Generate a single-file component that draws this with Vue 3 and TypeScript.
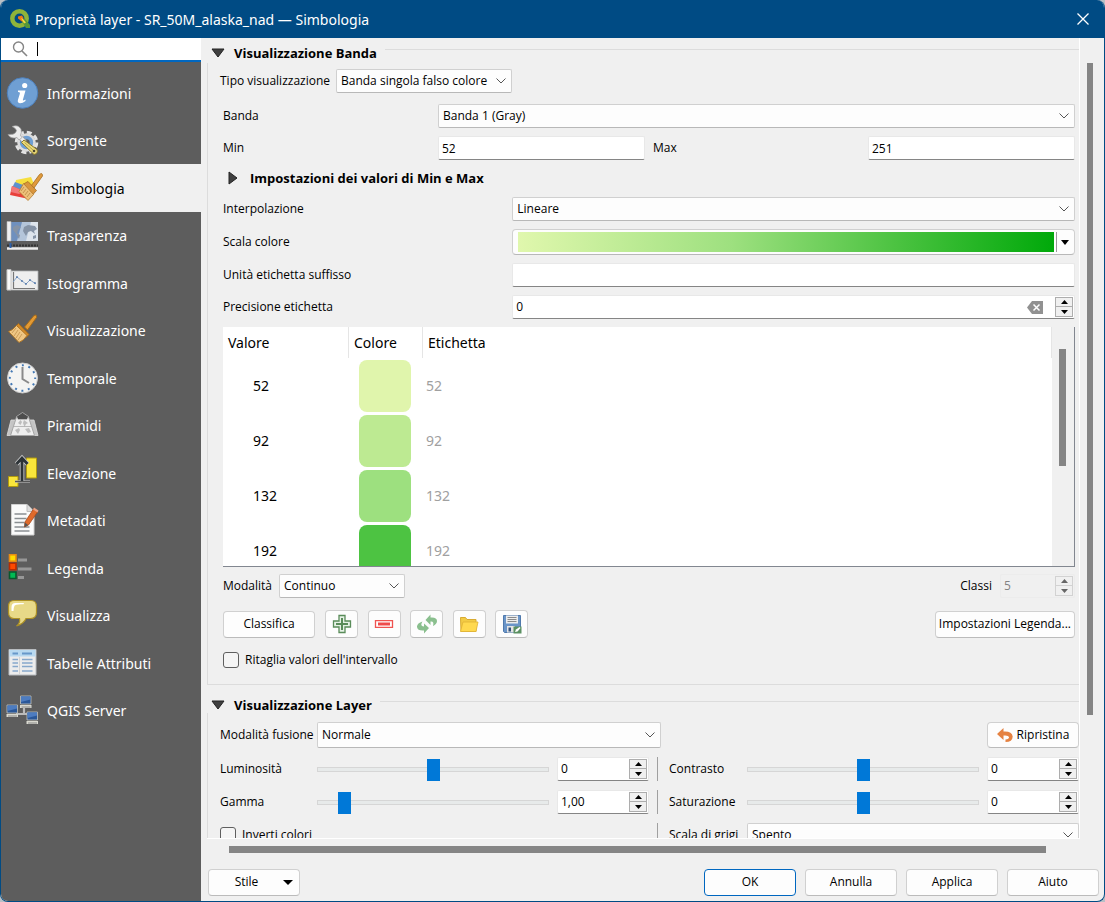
<script setup lang="ts">
import { reactive, ref } from 'vue'

interface NavItem {
  id: string
  label: string
}

const navItems: NavItem[] = [
  { id: 'info', label: 'Informazioni' },
  { id: 'source', label: 'Sorgente' },
  { id: 'symbology', label: 'Simbologia' },
  { id: 'transparency', label: 'Trasparenza' },
  { id: 'histogram', label: 'Istogramma' },
  { id: 'rendering', label: 'Visualizzazione' },
  { id: 'temporal', label: 'Temporale' },
  { id: 'pyramids', label: 'Piramidi' },
  { id: 'elevation', label: 'Elevazione' },
  { id: 'metadata', label: 'Metadati' },
  { id: 'legend', label: 'Legenda' },
  { id: 'display', label: 'Visualizza' },
  { id: 'tables', label: 'Tabelle Attributi' },
  { id: 'server', label: 'QGIS Server' },
]

const active = ref('symbology')

const classes = [
  { value: '52', color: '#e0f5ac' },
  { value: '92', color: '#bdea92' },
  { value: '132', color: '#9de07f' },
  { value: '192', color: '#4dc342' },
  { value: '251', color: '#05ab0c' },
]

const form = reactive({
  min: '52',
  max: '251',
  suffix: '',
  precision: '0',
  count: '5',
  brightness: 0,
  contrast: 0,
  gamma: 9,
  saturation: 0,
})
</script>

<template>
  <div class="window">
    <header class="titlebar">
      <svg class="logo" viewBox="0 0 20 20" aria-hidden="true">
        <circle cx="9.5" cy="9.500" r="7.200" fill="none" stroke="#8fb43a" stroke-width="4.500" />
        <path d="M11 11l4-1 5 6v3h-4z" fill="#56973a" />
        <path d="M8 7.500l4-1 1.500 2.500-1 4L8 9.500z" fill="#ee7913" />
        <path d="M11 9l2 1 3 3.500-2 1z" fill="#f5dc40" />
      </svg>
      <h1>Proprietà layer - SR_50M_alaska_nad — Simbologia</h1>
      <button class="close" type="button" aria-label="Chiudi">
        <svg viewBox="0 0 12 12"><path d="M.5.5l11 11M11.500.5l-11 11" stroke="#fff" stroke-width="1.300" fill="none" /></svg>
      </button>
    </header>

    <div class="body">
      <aside class="sidebar">
        <label class="search">
          <svg viewBox="0 0 16 16" aria-hidden="true">
            <circle cx="6.500" cy="6" r="5" fill="none" stroke="#858585" stroke-width="1.400" />
            <path d="M10 10l5 5" stroke="#858585" stroke-width="1.600" />
          </svg>
          <span class="caret"></span>
          <input type="text" aria-label="Cerca" />
        </label>
        <nav class="nav">
          <button
            v-for="item in navItems"
            :key="item.id"
            type="button"
            class="nav-item"
            :class="{ selected: item.id === active }"
            @click="active = item.id"
          >
            <svg class="nav-icon" viewBox="0 0 32 32" aria-hidden="true">
              <g v-if="item.id === 'info'">
                <circle cx="16.500" cy="16" r="15.300" fill="#6f9fd3" stroke="#4d7fba" />
                <circle cx="18.700" cy="8.500" r="2.600" fill="#fff" />
                <path d="M12 13.500h7.500l-2.600 9.300q-.5 1.700 2.600-.3v1.500q-3 2.500-5.700 2.300-2.600-.4-1.900-3.200l2-6.700q.3-1.300-1.900-1.300z" fill="#fff" />
              </g>
              <g v-else-if="item.id === 'source'">
                <circle cx="20.500" cy="18.500" r="10.300" fill="none" stroke="#e4e4e4" stroke-width="3" stroke-dasharray="5 3.090" />
                <circle cx="20.500" cy="18.500" r="8" fill="#6f9fd3" stroke="#dcdcdc" stroke-width="2.600" />
                <circle cx="20.500" cy="18.500" r="3.200" fill="#5d5d5d" />
                <path d="M15 14l4 4" stroke="#9a9a9a" stroke-width="5" />
                <path d="M14 13l4.500 4.500" stroke="#ececec" stroke-width="3.500" />
                <path d="M6 2.500q6-2.500 9 2.500 1 3-.5 6.500l1.500 2-3 2.500-2-2.500q-6 2-9-3l5-.3q3-1 3.500-3.500-.5-2.500-4.500-4.200z" fill="#ececec" stroke="#9a9a9a" stroke-width=".7" />
                <path d="M18 16l13 9.500q1.500 4-3 5L15.500 18.500z" fill="#eddc7a" stroke="#8b7a2c" />
                <path d="M18.500 18.500l8.500 7.500" stroke="#b8a54a" />
                <circle cx="28" cy="27" r="1.300" fill="#4a4530" />
              </g>
              <g v-else-if="item.id === 'symbology'">
                <path d="M6 8l15-3 3 7-8 8-12-4z" fill="#f6df3f" />
                <path d="M5 10l8 3 7 6-6 4-12-7z" fill="#5d91cf" />
                <path d="M2 14l12 5 5 8-19-4z" fill="#e8403b" />
                <path d="M2 14l12 5-5 3-8-2z" fill="#f2787a" />
                <path d="M21 14L29.500 2.500q3-2.500 3 1.500L24 16z" fill="#e09a3c" stroke="#a66d20" stroke-width=".8" />
                <path d="M18 9.500l8.500 9-4 4.500-9-11z" fill="#d9953d" stroke="#a66d20" stroke-width=".8" />
                <path d="M13.500 11.500l10 11-5.500 6-9-9z" fill="#edc07a" stroke="#b47a2c" stroke-width=".8" />
                <path d="M14 15l-3 4m5-2l-3 4m5-2l-3 4m5-2l-3 4" stroke="#b98943" stroke-width=".8" />
              </g>
              <g v-else-if="item.id === 'transparency'">
                <path d="M5 3h27v19H5z" fill="#6f90be" />
                <path d="M16 3h16v19H11z" fill="#b4c5da" />
                <path d="M25 3h7v19H20z" fill="#dde4ec" />
                <path d="M7 8l4-2 4 2-3 3-1 3 3 2-1 4-3-5-3-4zM18 8l4-2 7 1 2 3-3 2 1 3-4-3-3 1-2 4-3-5zM27 17l3-1v3l-3 1z" fill="#8593a6" />
                <path d="M1 2.500h4V22H1z" fill="#f1f1f1" stroke="#b5b5b5" stroke-width=".6" />
                <path d="M1 26.500h31" stroke="#333" stroke-width="2" stroke-dasharray="2 1" />
                <path d="M1 29.500h31" stroke="#ededed" stroke-width="2.500" />
                <path d="M3.500 24v5h2v-5z" fill="#2e62ad" />
              </g>
              <g v-else-if="item.id === 'histogram'">
                <path d="M4 4h28v19H1V3h3z" fill="#eee" stroke="#aeb1b3" stroke-width=".8" />
                <path d="M1 2.500h4V23H1z" fill="#fafafa" stroke="#bbb" stroke-width=".8" />
                <path d="M7.500 5v16.500H29" fill="none" stroke="#777" stroke-width="1.200" />
                <path d="M7 15l4-5 5 4 4 3 4-4 6 4" fill="none" stroke="#7d9cc4" stroke-width=".9" />
                <path d="M10.200 9.200h1.500v1.500h-1.500zM15.200 13.200h1.500v1.500h-1.500zM19.200 16.200h1.500v1.500h-1.500zM23.200 12.200h1.500v1.500h-1.500zM28.200 15.200h1.500v1.500h-1.500z" fill="#3c669e" />
              </g>
              <g v-else-if="item.id === 'rendering'">
                <path d="M18.500 13L28 1.500q3-1.500 2.500 2L21.500 16z" fill="#e39a34" stroke="#a56a18" />
                <path d="M12.500 9.500l10.500 11-3 3L9.500 12.500z" fill="#d58b28" stroke="#a56a18" />
                <path d="M10.500 11.500q-4 5-8 6l10.500 11q5-2 8-7z" fill="#efc683" stroke="#ad7426" />
                <path d="M10 14l-4 5m6-3l-4 6m6-4l-4 6m6-4l-4 6" stroke="#c2924e" stroke-width=".8" />
              </g>
              <g v-else-if="item.id === 'temporal'">
                <circle cx="16.500" cy="16" r="15" fill="#f4f4f2" stroke="#cfcfcf" />
                <circle cx="16.500" cy="16" r="12.700" fill="none" stroke="#4378b4" stroke-width="2" stroke-dasharray="2 4.650" stroke-dashoffset="1" />
                <path d="M16.500 5v12l6.500 4" fill="none" stroke="#8a8a8a" stroke-width="2" />
              </g>
              <g v-else-if="item.id === 'pyramids'">
                <path d="M5 11h23l4 15.500H1z" fill="#c4c4c4" stroke="#dcdcdc" stroke-width=".8" />
                <path d="M10.500 8h12l6 18.500H4.500z" fill="#eee" stroke="#a5a5a5" />
                <path d="M10.500 7.500l6-4 6 4-1.500 3h-9z" fill="#4d4d4d" stroke="#ccc" stroke-width=".6" />
                <path d="M12 14l2.500-3 1.500 2-1.500 3zM18 11l4 3-2 1-1.500 3-1.500-4zM9 21l4-2 1 2-2 4zM19 20l4-1 2 4-3 1z" fill="#bdbdbd" />
                <path d="M7.500 17.500h18" stroke="#aaa" stroke-width=".8" />
              </g>
              <g v-else-if="item.id === 'elevation'">
                <path d="M20.500 1h10v20h-10z" fill="#f9e53b" stroke="#b19a0e" />
                <path d="M2.500 19.500h9.500v10H2.500z" fill="#f9e53b" stroke="#b19a0e" />
                <path d="M9 24.500h15" stroke="#a8a8a8" stroke-width="2.400" />
                <path d="M9 24.500h15" stroke="#555" />
                <path d="M16 24V2M10.500 7L16 1l5.500 6" fill="none" stroke="#c9c9c9" stroke-width="4.500" />
                <path d="M16 24V2M10.500 7L16 1l5.500 6" fill="none" stroke="#2d3337" stroke-width="2.800" />
              </g>
              <g v-else-if="item.id === 'metadata'">
                <path d="M5.500.5H21l7 7v23.500H5.500z" fill="#fafafa" stroke="#d0d0d0" />
                <path d="M21 .5v7h7" fill="#ddd" stroke="#bbb" />
                <path d="M8.500 10h12m-12 4.500h12m-12 4h10m-10 4.500h15m-15 4h15" stroke="#8a8f92" stroke-width="1.300" />
                <path d="M27.500 5l4 3-9 13-4 2 .5-5z" fill="#df6a2b" stroke="#a8481a" stroke-width=".8" />
                <path d="M18.700 18.500l3.500 2.500-3.500 2z" fill="#555" />
                <path d="M28 3.500l4.500 3-1 2-4.500-3z" fill="#e9a184" />
              </g>
              <g v-else-if="item.id === 'legend'">
                <path d="M3.500 2.800h6.500v6.500H3.500z" fill="#ffdb00" stroke="#e78c13" stroke-width="1.600" />
                <path d="M3.500 11.300h6.500v6.500H3.500z" fill="#ff4a00" stroke="#b92b00" stroke-width="1.600" />
                <path d="M3.500 20h6.500v6.500H3.500z" fill="#00ba53" stroke="#09572d" stroke-width="1.600" />
                <path d="M12 8h9m-9 9h13.500M12 25.500h6" stroke="#979797" stroke-width="3" />
              </g>
              <g v-else-if="item.id === 'display'">
                <path d="M8 1.500h17q5.500 0 5.500 6v6q0 6-6 6h-4.500q-2 5-9.500 7.500 4-3 3-7.500H8q-5.500 0-5.500-6v-6q0-6 5.500-6z" fill="#e8d988" stroke="#ad9125" stroke-width="1.200" />
                <path d="M5.500 12V8q0-4 4-4H18l-.5 1.300q-8-.5-9 1.500T7.500 12z" fill="#fff" />
              </g>
              <g v-else-if="item.id === 'tables'">
                <path d="M3 2.500h27V28H3z" fill="#ececec" stroke="#b8bcc0" />
                <path d="M3.500 3h26v6.500h-26z" fill="#b8d9f0" />
                <path d="M6.500 6.500h5.500m4 0h10" stroke="#6798c9" stroke-width="2" />
                <path d="M6.500 12.500h5.500m4 0h10.500M6.500 16h5.500m4 0h10.500m-20 3.500h5.500m4 0h10.500M6.500 24h5.500m4 0h10.500" stroke="#86a8cb" stroke-width="1.400" />
                <path d="M13.500 10v18" stroke="#d4d4d4" />
              </g>
              <g v-else>
                <path d="M18 12v8m-8 0h12" stroke="#bbb" stroke-width="2.200" fill="none" />
                <g v-for="p in [[14, 1.5], [0.5, 10.5], [20.5, 17.5]]" :key="p[0]" :transform="`translate(${p[0]} ${p[1]})`">
                  <path d="M.5.5h10.500v8H.5z" fill="#2a5798" stroke="#c4c4bc" stroke-width=".8" />
                  <path d="M1 1h9.500v3l-9.500 2.500z" fill="#4d7cc0" />
                  <path d="M0 9.500h11.500v3H0z" fill="#d9d9d0" />
                  <path d="M1.500 11.500h9" stroke="#888" />
                </g>
              </g>
            </svg>
            <span>{{ item.label }}</span>
          </button>
        </nav>
      </aside>

      <main class="main">
        <div class="scroll-frame">
          <div class="viewport">
            <section class="group">
              <h2 class="group-title">
                <svg class="tri" viewBox="0 0 14 10"><path d="M1 1h12L7 9z" fill="#404040" stroke="#222" /></svg>
                <span>Visualizzazione Banda</span>
              </h2>
              <div class="group-body band">
                <div class="row type-row">
                  <label for="type">Tipo visualizzazione</label>
                  <span class="combo">
                    <select id="type"><option>Banda singola falso colore</option></select>
                    <svg viewBox="0 0 10 6"><path d="M.5.5L5 5 9.500.5" /></svg>
                  </span>
                </div>

                <div class="inset">
                  <div class="quad">
                    <label for="band">Banda</label>
                    <span class="combo wide">
                      <select id="band"><option>Banda 1 (Gray)</option></select>
                      <svg viewBox="0 0 10 6"><path d="M.5.5L5 5 9.500.5" /></svg>
                    </span>
                    <label for="min">Min</label>
                    <input id="min" v-model="form.min" class="field" type="text" />
                    <label for="max">Max</label>
                    <input id="max" v-model="form.max" class="field" type="text" />
                  </div>

                  <h3 class="sub-title">
                    <svg viewBox="0 0 10 14"><path d="M1 1v12l8-6z" fill="#404040" stroke="#222" /></svg>
                    <span>Impostazioni dei valori di Min e Max</span>
                  </h3>

                  <div class="pairs">
                    <label for="interp">Interpolazione</label>
                    <span class="combo">
                      <select id="interp"><option>Lineare</option></select>
                      <svg viewBox="0 0 10 6"><path d="M.5.5L5 5 9.500.5" /></svg>
                    </span>
                    <span id="ramp-label">Scala colore</span>
                    <div class="ramp">
                      <button class="ramp-bar" type="button" aria-labelledby="ramp-label"></button>
                      <button class="ramp-menu" type="button" aria-label="Altre scale">
                        <svg viewBox="0 0 8 5"><path d="M0 0h8L4 5z" /></svg>
                      </button>
                    </div>
                    <label for="suffix">Unità etichetta suffisso</label>
                    <input id="suffix" v-model="form.suffix" class="field" type="text" />
                    <label for="precision">Precisione etichetta</label>
                    <div class="spin">
                      <input id="precision" v-model="form.precision" type="text" />
                      <button class="clear" type="button" aria-label="Cancella">
                        <svg viewBox="0 0 16 13">
                          <path d="M5 0h11v13H5L0 6.500z" fill="#919191" />
                          <path d="M6.500 3.500l6 6m0-6l-6 6" stroke="#fff" stroke-width="1.500" />
                        </svg>
                      </button>
                      <span class="steps">
                        <button type="button" aria-label="Su"><svg viewBox="0 0 7 4"><path d="M0 4h7L3.500 0z" /></svg></button>
                        <button type="button" aria-label="Giù"><svg viewBox="0 0 7 4"><path d="M0 0h7L3.500 4z" /></svg></button>
                      </span>
                    </div>
                  </div>

                  <div class="table-box">
                    <div class="table-view">
                      <table>
                        <thead>
                          <tr>
                            <th class="c-value"><span>Valore</span></th>
                            <th class="c-color"><span>Colore</span></th>
                            <th><span>Etichetta</span></th>
                          </tr>
                        </thead>
                        <tbody>
                          <tr v-for="c in classes" :key="c.value">
                            <td class="value">{{ c.value }}</td>
                            <td><span class="swatch" :style="{ background: c.color }"></span></td>
                            <td class="tag">{{ c.value }}</td>
                          </tr>
                        </tbody>
                      </table>
                    </div>
                    <div class="table-scroll"><span></span></div>
                  </div>

                  <div class="row mode-row">
                    <label for="mode">Modalità</label>
                    <span class="combo mode">
                      <select id="mode"><option>Continuo</option></select>
                      <svg viewBox="0 0 10 6"><path d="M.5.5L5 5 9.500.5" /></svg>
                    </span>
                    <label class="push" for="count">Classi</label>
                    <div class="spin disabled">
                      <input id="count" v-model="form.count" type="text" disabled />
                      <span class="steps">
                        <button type="button" aria-label="Su" disabled><svg viewBox="0 0 7 4"><path d="M0 4h7L3.500 0z" /></svg></button>
                        <button type="button" aria-label="Giù" disabled><svg viewBox="0 0 7 4"><path d="M0 0h7L3.500 4z" /></svg></button>
                      </span>
                    </div>
                  </div>

                  <div class="row tools">
                    <button class="btn" type="button">Classifica</button>
                    <div class="toolset">
                      <button class="btn tool" type="button" aria-label="Aggiungi">
                        <svg viewBox="0 0 20 20">
                          <path d="M7 1.500h6V7h5.500v6H13v5.500H7V13H1.500V7H7z" fill="#e6f2e6" stroke="#5a8c5a" stroke-width="1.300" />
                          <path d="M10 4v12M4 10h12" stroke="#5a8c5a" stroke-width="2" />
                        </svg>
                      </button>
                      <button class="btn tool" type="button" aria-label="Rimuovi">
                        <svg viewBox="0 0 20 20">
                          <path d="M1.500 6.700h17v6.600h-17z" fill="#fff" stroke="#ef5350" stroke-width="1.300" />
                          <path d="M4 10h12" stroke="#ef4b4b" stroke-width="3" />
                        </svg>
                      </button>
                      <button class="btn tool" type="button" aria-label="Inverti">
                        <svg viewBox="0 0 20 20">
                          <path d="M8.500 6l5-5.500v3q6.500-.5 6.500 3.500 0 3-4 5 1.500-5-2.500-4.500v3.500z" fill="#8abf8e" />
                          <path d="M12 14l-5 5.500v-3q-6.500.5-7-3.500-.3-3.500 5.500-5.500-3 5 1.500 5V9.500z" fill="#8abf8e" />
                        </svg>
                      </button>
                      <button class="btn tool" type="button" aria-label="Apri">
                        <svg viewBox="0 0 20 20">
                          <path d="M1.500 3.500h5l1.500 2h9v12h-15z" fill="#f2cb45" stroke="#d8ab32" />
                          <path d="M4 8h15l-2 9.500H1.500z" fill="#ffd94f" stroke="#e0b236" stroke-width=".8" />
                        </svg>
                      </button>
                      <button class="btn tool" type="button" aria-label="Salva">
                        <svg viewBox="0 0 20 20">
                          <path d="M1.500 1.500h17v17h-16l-1-1z" fill="#6b95c8" stroke="#4f79ac" />
                          <path d="M4 1.500h12v8H4z" fill="#ececec" />
                          <path d="M5.500 3.500h9m-9 2h9m-9 2h9" stroke="#8a8a8a" />
                          <path d="M5 12h8v6.500H5z" fill="#e4e4e4" />
                          <path d="M6.500 13.500h2.500v4H6.500z" fill="#31517c" />
                          <path d="M11.500 12.500h8v7h-8z" fill="#5b9062" />
                          <path d="M13 18l1-2.500 3.500-2.500 1 1-3 3.500z" fill="#fff" />
                        </svg>
                      </button>
                    </div>
                    <button class="btn push snug" type="button">Impostazioni Legenda...</button>
                  </div>

                  <label class="check"><input type="checkbox" /><span>Ritaglia valori dell'intervallo</span></label>
                </div>
              </div>
            </section>

            <section class="group">
              <h2 class="group-title second">
                <svg class="tri" viewBox="0 0 14 10"><path d="M1 1h12L7 9z" fill="#404040" stroke="#222" /></svg>
                <span>Visualizzazione Layer</span>
              </h2>
              <div class="group-body layer">
                <div class="row blend-row">
                  <label for="blend">Modalità fusione</label>
                  <span class="combo">
                    <select id="blend"><option>Normale</option></select>
                    <svg viewBox="0 0 10 6"><path d="M.5.5L5 5 9.500.5" /></svg>
                  </span>
                  <button class="btn push reset" type="button">
                    <svg viewBox="0 0 16 16">
                      <path d="M0 7l6.500-6v3.500q8.500-.5 9.200 5-.2 5.500-7.200 5.500v-2.500q3.700-.5 3.500-2.500-.5-2-5.500-1.500V13z" fill="#e58242" />
                    </svg>
                    <span>Ripristina</span>
                  </button>
                </div>
                <div class="adjust">
                  <label for="brightness">Luminosità</label>
                  <input v-model="form.brightness" class="slider" type="range" min="-255" max="255" aria-label="Luminosità" />
                  <div class="spin">
                    <input id="brightness" type="text" value="0" />
                    <span class="steps">
                      <button type="button" aria-label="Su"><svg viewBox="0 0 7 4"><path d="M0 4h7L3.500 0z" /></svg></button>
                      <button type="button" aria-label="Giù"><svg viewBox="0 0 7 4"><path d="M0 0h7L3.500 4z" /></svg></button>
                    </span>
                  </div>
                  <i class="sep"></i>
                  <label for="contrast">Contrasto</label>
                  <input v-model="form.contrast" class="slider" type="range" min="-100" max="100" aria-label="Contrasto" />
                  <div class="spin">
                    <input id="contrast" type="text" value="0" />
                    <span class="steps">
                      <button type="button" aria-label="Su"><svg viewBox="0 0 7 4"><path d="M0 4h7L3.500 0z" /></svg></button>
                      <button type="button" aria-label="Giù"><svg viewBox="0 0 7 4"><path d="M0 0h7L3.500 4z" /></svg></button>
                    </span>
                  </div>

                  <label for="gamma">Gamma</label>
                  <input v-model="form.gamma" class="slider" type="range" min="0" max="100" aria-label="Gamma" />
                  <div class="spin">
                    <input id="gamma" type="text" value="1,00" />
                    <span class="steps">
                      <button type="button" aria-label="Su"><svg viewBox="0 0 7 4"><path d="M0 4h7L3.500 0z" /></svg></button>
                      <button type="button" aria-label="Giù"><svg viewBox="0 0 7 4"><path d="M0 0h7L3.500 4z" /></svg></button>
                    </span>
                  </div>
                  <i class="sep"></i>
                  <label for="saturation">Saturazione</label>
                  <input v-model="form.saturation" class="slider" type="range" min="-100" max="100" aria-label="Saturazione" />
                  <div class="spin">
                    <input id="saturation" type="text" value="0" />
                    <span class="steps">
                      <button type="button" aria-label="Su"><svg viewBox="0 0 7 4"><path d="M0 4h7L3.500 0z" /></svg></button>
                      <button type="button" aria-label="Giù"><svg viewBox="0 0 7 4"><path d="M0 0h7L3.500 4z" /></svg></button>
                    </span>
                  </div>

                  <label class="check span3"><input type="checkbox" /><span>Inverti colori</span></label>
                  <i class="sep"></i>
                  <label for="gray">Scala di grigi</label>
                  <span class="combo span2">
                    <select id="gray"><option>Spento</option></select>
                    <svg viewBox="0 0 10 6"><path d="M.5.5L5 5 9.500.5" /></svg>
                  </span>
                </div>
              </div>
            </section>
          </div>
          <div class="vbar"><span></span></div>
          <div class="hbar"><span></span></div>
        </div>

        <footer class="footer">
          <button class="btn style" type="button">
            <span>Stile</span>
            <svg viewBox="0 0 10 5"><path d="M0 0h10L5 5z" /></svg>
          </button>
          <button class="btn push primary" type="button">OK</button>
          <button class="btn" type="button">Annulla</button>
          <button class="btn" type="button">Applica</button>
          <button class="btn" type="button">Aiuto</button>
        </footer>
      </main>
    </div>
  </div>
</template>

<style>
body {
  margin: 0;
  background: #b9c0c6;
}
</style>

<style scoped>
.window,
.window * {
  box-sizing: border-box;
}
.window {
  display: flex;
  flex-direction: column;
  height: 100vh;
  border: solid #004b84;
  border-width: 0 1px 1px;
  border-radius: 8px;
  overflow: hidden;
  background: #f0f0f0;
  color: #000;
  font: 12px/16px "Open Sans", "Noto Sans", sans-serif;
}
button,
input,
select {
  font: inherit;
  color: inherit;
  margin: 0;
  padding: 0;
}
button {
  border: 0;
  background: none;
}
svg {
  display: block;
  flex: none;
}
h1,
h2,
h3 {
  margin: 0;
}

.titlebar {
  flex: none;
  display: flex;
  align-items: center;
  height: 38px;
  padding: 0 15px 0 9px;
  background: #004b84;
  color: #fff;
}
.logo {
  width: 20px;
  height: 20px;
}
.titlebar h1 {
  margin-left: 5px;
  padding-top: 2px;
  font: 400 14px/16px "Noto Sans", "Open Sans", sans-serif;
}
.close {
  margin-left: auto;
}
.close svg {
  width: 12px;
  height: 12px;
}

.body {
  flex: 1;
  display: flex;
  min-height: 0;
}
.sidebar {
  flex: none;
  width: 200px;
  background: #5d5d5d;
}
.search {
  display: flex;
  align-items: center;
  height: 24px;
  padding-left: 11px;
  background: #fff;
  border-bottom: 2px solid #0067c0;
}
.search svg {
  width: 16px;
  height: 16px;
}
.caret {
  width: 1px;
  height: 14px;
  margin-left: 9px;
  background: #000;
}
.search input {
  flex: 1;
  min-width: 0;
  border: 0;
  outline: 0;
  background: none;
}
.nav {
  display: grid;
  grid-auto-rows: 1fr;
  height: 665px;
  margin-top: 7px;
}
.nav-item {
  display: flex;
  align-items: center;
  gap: 9px;
  padding-left: 5px;
  color: #fff;
  font: 14px/16px "Noto Sans", "Open Sans", sans-serif;
  text-align: left;
}
.nav-item span {
  padding-top: 2px;
}
.nav-item.selected {
  padding-left: 9px;
  background: #f0f0f0;
  color: #000;
}
.nav-icon {
  width: 32px;
  height: 32px;
  overflow: visible;
}

.main {
  flex: 1;
  display: flex;
  flex-direction: column;
  min-width: 0;
  min-height: 0;
}
.scroll-frame {
  flex: 1;
  min-height: 0;
  display: grid;
  grid-template-columns: minmax(0, 1fr) 24px;
  grid-template-rows: minmax(0, 1fr) 22px;
  padding-left: 6px;
}
.viewport {
  overflow: hidden;
  padding-top: 5px;
  border: solid #fff;
  border-width: 0 1px 1px 0;
}
.vbar {
  padding: 25px 0 0 7px;
}
.vbar span {
  display: block;
  width: 6px;
  height: 84%;
  background: #858585;
}
.hbar {
  padding: 7px 34px 0 22px;
}
.hbar span {
  display: block;
  height: 7px;
  background: #858585;
}

.group-title {
  display: flex;
  align-items: center;
  height: 20px;
  padding-left: 4px;
  font-size: 13px;
}
.group-title.second {
  height: 28px;
  padding-top: 12px;
}
.tri {
  width: 14px;
  height: 10px;
}
.group-title span {
  margin-left: 9px;
}
.group-title::after {
  content: "";
  flex: 1;
  height: 1px;
  margin: 0 0 7px 8px;
  background: #dcdcdc;
}
.group-body {
  border-left: 1px solid #dcdcdc;
}
.band {
  padding: 6px 4px 16px 12px;
  border-bottom: 1px solid #dcdcdc;
}
.row {
  display: flex;
  align-items: center;
  white-space: nowrap;
}
.push {
  margin-left: auto;
}
.type-row label {
  width: 108px;
}
.type-row .combo {
  width: 176px;
  margin-left: 8px;
}
.inset {
  margin-left: 3px;
}

.combo {
  display: grid;
  align-items: center;
  height: 24px;
}
.combo select,
.combo svg {
  grid-area: 1 / 1;
}
.combo select {
  appearance: none;
  width: 100%;
  height: 100%;
  padding: 0 20px 0 4px;
  border: 1px solid #d0d0d0;
  border-bottom-color: #b8b8b8;
  border-radius: 2px;
  background: #fdfdfd;
}
.combo svg {
  justify-self: end;
  width: 10px;
  height: 6px;
  margin-right: 6px;
  pointer-events: none;
  fill: none;
  stroke: #555;
}
.field,
.spin {
  width: 100%;
  height: 24px;
  border: 1px solid #e8e8e8;
  border-bottom-color: #858585;
  border-radius: 2px;
  background: #fff;
}
.field {
  padding: 0 3px;
}
.spin {
  display: flex;
  align-items: center;
  padding-right: 1px;
}
.spin input {
  flex: 1;
  min-width: 0;
  width: 0;
  padding: 0 3px;
  border: 0;
  outline: 0;
  background: none;
}
.clear svg {
  width: 16px;
  height: 13px;
  margin-right: 12px;
}
.steps {
  display: grid;
  grid-template-rows: 1fr 1fr;
  width: 18px;
  height: 20px;
}
.steps button {
  display: grid;
  place-items: center;
  border: 1px solid #adadad;
  background: #f0f0f0;
}
.steps button + button {
  border-top: 0;
}
.steps svg {
  width: 7px;
  height: 4px;
}
.spin.disabled {
  width: 75px;
  margin-left: 8px;
  border-color: #ececec;
  background: #f0f0f0;
  color: #838383;
}
.disabled .steps button {
  border-color: #d2d2d2;
}
.disabled .steps svg {
  fill: #666;
}

.quad {
  display: grid;
  grid-template-columns: repeat(4, minmax(0, 1fr));
  align-items: center;
  gap: 8px;
  margin-top: 11px;
}
.combo.wide {
  grid-column: span 3;
}
.sub-title {
  display: flex;
  align-items: center;
  height: 20px;
  margin: 8px 0 9px;
  padding-left: 5px;
  font-size: 13px;
}
.sub-title svg {
  width: 10px;
  height: 14px;
}
.sub-title span {
  margin-left: 12px;
}
.pairs {
  display: grid;
  grid-template-columns: minmax(0, 1fr) minmax(0, 2fr);
  align-items: center;
  gap: 8px;
}
.ramp {
  display: flex;
  height: 26px;
  padding: 2px 0 2px 5px;
  border: 1px solid #d0d0d0;
  border-bottom-color: #b8b8b8;
  border-radius: 4px;
  background: #fdfdfd;
}
.ramp-bar {
  flex: 1;
  background: linear-gradient(90deg, #e0f7ad, #9de07f 40%, #4dc342 70%, #00a90a);
}
.ramp-menu {
  width: 18px;
  margin-left: 2px;
  padding-left: 4px;
  border-left: 1px solid #999;
}
.ramp-menu svg {
  width: 8px;
  height: 5px;
}

.table-box {
  display: flex;
  height: 240px;
  margin-top: 8px;
  border: solid #828790;
  border-width: 0 1px 1px 0;
  overflow: hidden;
  font: 14px/16px "Noto Sans", "Open Sans", sans-serif;
}
.table-view {
  flex: 1;
  overflow: hidden;
  background: #fff;
}
table {
  width: 100%;
  table-layout: fixed;
  border-collapse: collapse;
}
th,
td {
  padding: 0;
  text-align: left;
  font-weight: 400;
}
th {
  height: 31px;
}
th span {
  display: block;
  padding: 8px 0 7px 5px;
  border-right: 1px solid #e5e5e5;
}
.c-value {
  width: 126px;
}
.c-color {
  width: 74px;
}
td {
  height: 55px;
}
td.value {
  padding-left: 30px;
}
td.tag {
  padding-left: 3px;
  color: #a0a0a0;
}
.swatch {
  display: block;
  width: 52px;
  height: 52px;
  margin-left: 10px;
  border-radius: 8px;
}
.table-scroll {
  width: 22px;
  padding: 22px 0 0 7px;
}
.table-scroll span {
  display: block;
  width: 7px;
  height: 117px;
  background: #858585;
}

.mode-row {
  margin-top: 7px;
}
.mode-row label:first-child {
  width: 48px;
}
.combo.mode {
  width: 126px;
  margin-left: 8px;
}
.btn {
  display: flex;
  align-items: center;
  justify-content: center;
  width: 92px;
  height: 27px;
  border: 1px solid #d0d0d0;
  border-bottom-color: #bbb;
  border-radius: 4px;
  background: #fdfdfd;
}
.tools {
  gap: 10px;
  margin-top: 12px;
}
.toolset {
  display: flex;
  justify-content: space-between;
  width: 203px;
}
.btn.tool {
  width: 33px;
  height: 28px;
}
.tool svg {
  width: 20px;
  height: 20px;
}
.btn.snug {
  width: auto;
  padding: 0 3px;
}
.check {
  display: flex;
  align-items: center;
  gap: 6px;
}
.check input {
  appearance: none;
  width: 16px;
  height: 16px;
  border: 1px solid #5f5f5f;
  border-radius: 3px;
  background: #f5f5f5;
}
.tools + .check {
  margin-top: 14px;
}

.layer {
  padding: 9px 0 9px 12px;
}
.blend-row label {
  width: 90px;
}
.blend-row .combo {
  width: 344px;
  height: 26px;
  margin-left: 7px;
}
.btn.reset {
  height: 26px;
  gap: 4px;
}
.reset svg {
  width: 16px;
  height: 16px;
}
.adjust {
  display: grid;
  grid-template-columns: 89px minmax(0, 1fr) 92px 4px 70px minmax(0, 1fr) 92px;
  align-items: center;
  gap: 9px 8px;
  margin-top: 9px;
  white-space: nowrap;
}
.span3 {
  grid-column: span 3;
}
.span2 {
  grid-column: span 2;
}
.sep {
  width: 1px;
  height: 24px;
  background: #a0a0a0;
}
.slider {
  appearance: none;
  width: 100%;
  height: 24px;
  background: none;
}
.slider::-webkit-slider-runnable-track {
  height: 5px;
  border: 1px solid #d6d6d6;
  background: #e7eaea;
}
.slider::-webkit-slider-thumb {
  appearance: none;
  width: 13px;
  height: 22px;
  margin-top: -9px;
  background: #0078d7;
}

.footer {
  flex: none;
  display: flex;
  align-items: center;
  gap: 9px;
  height: 40px;
  padding: 2px 5px 0 7px;
}
.btn.primary {
  border-color: #0067c0;
}
.style {
  gap: 25px;
}
.style span {
  margin-left: 20px;
}
.style svg {
  width: 10px;
  height: 5px;
}
</style>
